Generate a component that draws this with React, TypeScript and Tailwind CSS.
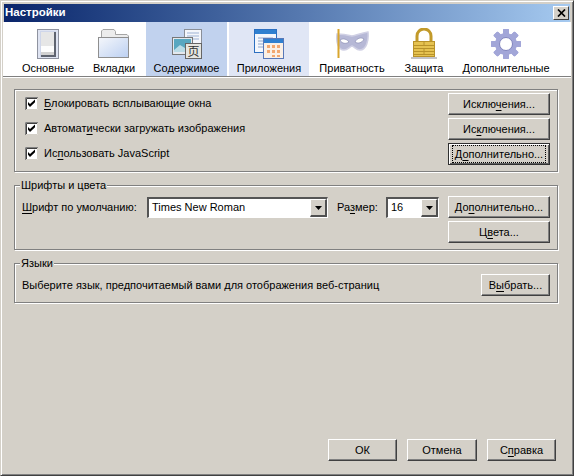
import React from "react";

const etched = "border border-[#808080] shadow-[inset_1px_1px_0_#fff,1px_1px_0_#fff]";

function U({ children }: { children: React.ReactNode }) {
  return <span className="underline underline-offset-2">{children}</span>;
}

function Btn({ children, w = "w-[102px]", focus = false }: { children: React.ReactNode; w?: string; focus?: boolean }) {
  return (
    <div className={`${w} h-[22px] flex items-center justify-center bg-[#d4d0c8] ${focus ? "border border-[#303030] shadow-[inset_1px_1px_0_#fff,inset_-1px_-1px_0_#606060]" : "border-t border-l border-t-white border-l-white border-r border-b border-r-[#404040] border-b-[#404040] shadow-[inset_-1px_-1px_0_#808080]"}`}>
      <span className={focus ? "px-[2px] outline-1 outline-dotted outline-black" : ""}>{children}</span>
    </div>
  );
}

function Check({ children }: { children: React.ReactNode }) {
  return (
    <div className="flex items-center h-[25px]">
      <svg width="13" height="13" viewBox="0 0 13 13" className="mr-[6px] shrink-0">
        <rect width="13" height="13" fill="#fff" />
        <path d="M12.500 0v12.500H0" fill="none" stroke="#d4d0c8" />
        <path d="M0.500 13V0.500H13" fill="none" stroke="#808080" />
        <path d="M1.500 12V1.500H12" fill="none" stroke="#404040" />
        <path d="M3 5l2 2 5-4.500v2.800l-5 4.700-2-2.200z" fill="#000" />
      </svg>
      <span>{children}</span>
    </div>
  );
}

function Select({ text, w }: { text: string; w: string }) {
  return (
    <div className={`${w} h-[21px] flex items-stretch bg-white border-t-2 border-l-2 border-t-[#555] border-l-[#555] border-r border-b border-r-white border-b-white`}>
      <span className="flex-1 pl-[3px] leading-[17px]">{text}</span>
      <div className="w-[17px] flex items-center justify-center bg-[#d4d0c8] border-t border-l border-white border-r-2 border-b-2 border-r-[#505050] border-b-[#505050]">
        <svg width="7" height="4" viewBox="0 0 7 4"><path d="M0 0h7L3.500 4z" fill="#000" /></svg>
      </div>
    </div>
  );
}

function Group({ legend, className, children }: { legend?: string; className: string; children: React.ReactNode }) {
  return (
    <div className={`relative ${etched} ${className}`}>
      {legend && <span className="absolute -top-[8px] left-[5px] bg-[#d4d0c8] px-[1px] leading-[14px]">{legend}</span>}
      {children}
    </div>
  );
}

const icons: Record<string, React.ReactNode> = {
  general: (
    <svg width="22" height="30" viewBox="0 0 22 30">
      <rect x="0.500" y="0.500" width="21" height="29" fill="#dfe4f2" stroke="#8f93a0" />
      <rect x="3" y="2" width="16" height="26" fill="#cfd6ea" />
      <rect x="4" y="3" width="15" height="25" fill="#5f6470" />
      <rect x="4" y="3" width="13" height="14" fill="#e6e6e6" />
      <rect x="4" y="17" width="13" height="6" fill="#fdfdfd" />
      <rect x="4" y="23" width="13" height="3" fill="#d2d2d2" />
    </svg>
  ),
  tabs: (
    <svg width="32" height="29" viewBox="0 0 32 29">
      <defs>
        <linearGradient id="f" x1="0" y1="0" x2="1" y2="1">
          <stop offset="0" stopColor="#f5f7fb" />
          <stop offset="1" stopColor="#bcd0f2" />
        </linearGradient>
      </defs>
      <path d="M3.500 8V2l1.500-1.500h11l1.500 2V5.500H29l1.500 1.500v3H3.500z" fill="#ececec" stroke="#a5a5a5" />
      <rect x="0.500" y="8.500" width="30" height="20" fill="url(#f)" stroke="#8f8f8f" />
    </svg>
  ),
  content: (
    <svg width="30" height="30" viewBox="0 0 30 30">
      <rect x="12.500" y="0.500" width="17" height="22" fill="#f4f6fb" stroke="#8a8f98" />
      <path d="M15 4h12M15 7h12M15 10h12" stroke="#9db2d4" />
      <rect x="0.500" y="8.500" width="20" height="17" fill="#e4e8ee" stroke="#777" />
      <rect x="2" y="10" width="17" height="13" fill="#58a7c0" />
      <path d="M2 21l6-5 5 3 6-2v6H2z" fill="#b9dbe6" />
      <rect x="13.500" y="14.500" width="16" height="15" fill="#e6e6e0" stroke="#666" />
      <text x="21.500" y="27" textAnchor="middle" fontSize="12" fontFamily="Noto Sans CJK SC, sans-serif" fill="#333">页</text>
    </svg>
  ),
  apps: (
    <svg width="30" height="30" viewBox="0 0 30 30">
      <rect x="0.500" y="0.500" width="22" height="23" fill="#f4f7fc" stroke="#2c6fc0" />
      <rect x="1" y="1" width="21" height="4" fill="#2f80d0" />
      <path d="M4 9h15M4 12h15M4 15h7M4 18h7" stroke="#8ea6cc" />
      <rect x="9.500" y="9.500" width="20" height="20" fill="#faf0e6" stroke="#5878b8" />
      <rect x="10" y="10" width="19" height="4" fill="#2f80d0" />
      <path d="M13 16h3v3h-3zM18 16h3v3h-3zM23 16h3v3h-3zM13 21h3v3h-3zM18 21h3v3h-3zM23 21h3v3h-3zM18 26h3v2h-3zM23 26h3v2h-3z" fill="#f2a870" />
    </svg>
  ),
  privacy: (
    <svg width="33" height="29" viewBox="0 0 33 29">
      <path d="M1 5c8 0 11 1 15 2 5-1 9-3 16-4 1 9-2 18-8 18-4 0-5-3-8-4-3 1-4 4-8 4-6 0-8-8-7-16z" fill="#b6b8d6" stroke="#d0d0e4" strokeWidth="1.500" />
      <path d="M4 11c3-2 7-1 9 2-3 2-7 2-9-2zM28 10c-3-2-7-1-9 3 3 2 7 1 9-3z" fill="#fff" stroke="#8d8fb4" strokeWidth="0.700" />
      <rect x="1.500" y="0" width="2" height="29" fill="#d9a62e" />
    </svg>
  ),
  security: (
    <svg width="26" height="31" viewBox="0 0 26 31">
      <path d="M6 14V8a7 7 0 0 1 14 0v6" fill="none" stroke="#c29a2a" strokeWidth="3" />
      <rect x="2.500" y="13.500" width="21" height="15" fill="#e5c250" stroke="#b8922a" />
      <path d="M3 17.500h20M3 20.500h20M3 23.500h20M3 26.500h20M13 14v4M13 21v5" stroke="#b8922a" />
      <rect x="0" y="29" width="26" height="2" fill="#c4c4c8" />
    </svg>
  ),
  advanced: (
    <svg width="30" height="30" viewBox="0 0 30 30">
      <g fill="#a2a6d8">
        {[0, 45, 90, 135, 180, 225, 270, 315].map((a) => (
          <rect key={a} x="12" y="0" width="6" height="30" rx="1" transform={`rotate(${a} 15 15)`} />
        ))}
      </g>
      <circle cx="15" cy="15" r="11" fill="#a2a6d8" />
      <circle cx="15" cy="15" r="6.500" fill="#fff" stroke="#8084bd" />
    </svg>
  ),
};

const tabs = [
  { k: "general", label: "Основные", w: "w-[68px] ml-[11px]", bg: "" },
  { k: "tabs", label: "Вкладки", w: "w-[64px]", bg: "" },
  { k: "content", label: "Содержимое", w: "w-[81px]", bg: "bg-[#c1d2ee]" },
  { k: "apps", label: "Приложения", w: "w-[80px] ml-[2px]", bg: "bg-[#e0e6f5]" },
  { k: "privacy", label: "Приватность", w: "w-[86px]", bg: "" },
  { k: "security", label: "Защита", w: "w-[58px]", bg: "" },
  { k: "advanced", label: "Дополнительные", w: "w-[106px]", bg: "" },
];

export default function App() {
  return (
    <div className="w-[574px] h-[476px] bg-[#d4d0c8] text-[11px] text-black flex flex-col overflow-hidden border border-t-[#d4d0c8] border-l-[#d4d0c8] border-r-[#404040] border-b-[#404040] shadow-[inset_1px_1px_0_#fff,inset_-1px_-1px_0_#808080]" style={{ fontFamily: '"Liberation Sans", Arial, sans-serif' }}>
      <div className="mx-[3px] mt-[3px] h-[18px] flex items-center justify-between bg-gradient-to-r from-[#0a246a] to-[#a6caf0] pl-[1px] pr-[1px] shrink-0">
        <span className="text-white font-bold text-[11.500px]">Настройки</span>
        <div className="w-[16px] h-[14px] mb-[1px] bg-[#d4d0c8] flex items-center justify-center border-t border-l border-t-white border-l-white border-r border-b border-r-[#404040] border-b-[#404040]">
          <svg width="9" height="8" viewBox="0 0 9 8"><path d="M1 0.500l7 7M8 0.500l-7 7" stroke="#000" strokeWidth="1.700" /></svg>
        </div>
      </div>
      <div className="mx-[2px] h-[55px] bg-white flex border-b border-b-[#808080] shrink-0">
        {tabs.map((t) => (
          <div key={t.k} className={`${t.w} ${t.bg} flex flex-col items-center justify-end shrink-0`}>
            <div className="h-[33px] flex items-center justify-center">{icons[t.k]}</div>
            <span className="h-[16px] leading-[16px] whitespace-nowrap">{t.label}</span>
          </div>
        ))}
      </div>
      <div className="h-px mx-[2px] bg-white shrink-0" />
      <div className="flex-1 flex flex-col pl-[13px] pr-[15px] pt-[11px] pb-[14px]">
        <Group className="h-[83px] flex justify-between pl-[10px] pr-[7px]">
          <div className="flex flex-col pt-[1px]">
            <Check><U>Б</U>локировать всплывающие окна</Check>
            <Check>Автомат<U>и</U>чески загружать изображения</Check>
            <Check>Ис<U>п</U>ользовать JavaScript</Check>
          </div>
          <div className="flex flex-col gap-[3px] pt-[3px]">
            <Btn>Исклю<U>ч</U>ения...</Btn>
            <Btn>Ис<U>к</U>лючения...</Btn>
            <Btn focus>Д<U>о</U>полнительно...</Btn>
          </div>
        </Group>
        <Group legend="Шрифты и цвета" className="mt-[13px] h-[65px] flex justify-between pl-[7px] pr-[7px] pt-[10px]">
          <div className="flex items-start pt-[1px]">
            <span className="w-[125px] leading-[20px]"><U>Ш</U>рифт по умолчанию:</span>
            <Select text="Times New Roman" w="w-[181px]" />
            <span className="ml-[9px] w-[49px] leading-[20px]">Ра<U>з</U>мер:</span>
            <Select text="16" w="w-[53px]" />
          </div>
          <div className="flex flex-col gap-[3px]">
            <Btn>До<U>п</U>олнительно...</Btn>
            <Btn>Ц<U>в</U>ета...</Btn>
          </div>
        </Group>
        <Group legend="Языки" className="mt-[13px] h-[40px] flex justify-between items-center pl-[7px] pr-[7px] pt-[4px]">
          <span>Выберите язык, предпочитаемый вами для отображения веб-страниц</span>
          <Btn w="w-[69px]">В<U>ы</U>брать...</Btn>
        </Group>
        <div className="mt-auto flex justify-end gap-[10px] pr-[2px]">
          <Btn w="w-[69px]">ОК</Btn>
          <Btn w="w-[70px]">Отмена</Btn>
          <Btn w="w-[69px]">С<U>п</U>равка</Btn>
        </div>
      </div>
    </div>
  );
}
